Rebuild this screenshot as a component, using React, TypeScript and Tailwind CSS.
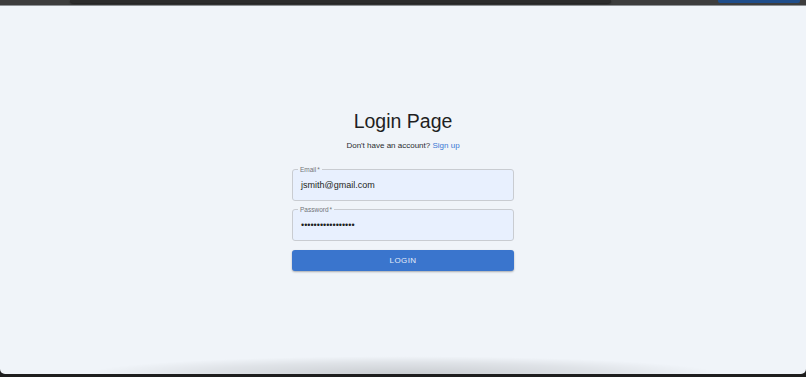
import React from "react";

function Field({ label, value }: { label: string; value: string }) {
  return (
    <div className="relative h-[32px] w-[222px] rounded-[3px] border border-[#c9ccd1] bg-[#e8f0fe] flex items-center pl-[8px]">
      <span className="absolute left-[5px] top-[-5px] px-[2px] text-[6.5px] leading-[9px] text-[#707479] bg-[linear-gradient(to_bottom,#f0f4f9_50%,#e8f0fe_50%)]">
        {label}
        <span className="ml-[1px]">*</span>
      </span>
      <span className="text-[9px] text-[#1d1f22] leading-none">{value}</span>
    </div>
  );
}

export default function App() {
  return (
    <div className="w-[806px] h-[377px] bg-[#1e1e1e] flex flex-col overflow-hidden font-['Liberation_Sans',Arial,sans-serif]">
      <div className="h-[5px] bg-[#3d3d3d] flex items-start">
        <div className="w-[70px]" />
        <div className="w-[541px] h-[3px] rounded-b-[3px] bg-[#2c2c2c] shadow-[0_1px_2px_rgba(0,0,0,0.5)]" />
        <div className="flex-1" />
        <div className="w-[82px] h-[3px] rounded-b-[2px] bg-[#1f4d8a]" />
        <div className="w-[6px]" />
      </div>
      <div className="h-px bg-[#8e9296]" />
      <div className="flex-1 bg-[#f0f4f9] rounded-b-[5px] flex flex-col items-center overflow-hidden">
        <div className="pt-[104px] flex flex-col items-center">
          <h1 className="text-[19.5px] leading-[23px] text-[#1f1f1f]">Login Page</h1>
          <p className="mt-[8px] text-[8px] leading-[10px] text-[#2a2c2f]">
            Don&apos;t have an account?{" "}
            <a className="text-[#3a78d4]">Sign up</a>
          </p>
          <div className="mt-[18px] flex flex-col gap-[8px]">
            <Field label="Email" value="jsmith@gmail.com" />
            <Field label="Password" value={"•".repeat(17)} />
          </div>
          <button className="mt-[9px] h-[21px] w-[222px] rounded-[3px] bg-[#3a75cd] text-[#e4ecf8] text-[8px] tracking-[0.4px] shadow-[0_1px_2px_rgba(0,0,0,0.3)]">
            LOGIN
          </button>
        </div>
        <div className="flex-1" />
        <div className="w-[640px] h-[18px] bg-[radial-gradient(ellipse_at_bottom,rgba(0,0,0,0.16)_0%,rgba(0,0,0,0.07)_45%,rgba(0,0,0,0)_70%)]" />
      </div>
      <div className="h-[3px]" />
    </div>
  );
}
